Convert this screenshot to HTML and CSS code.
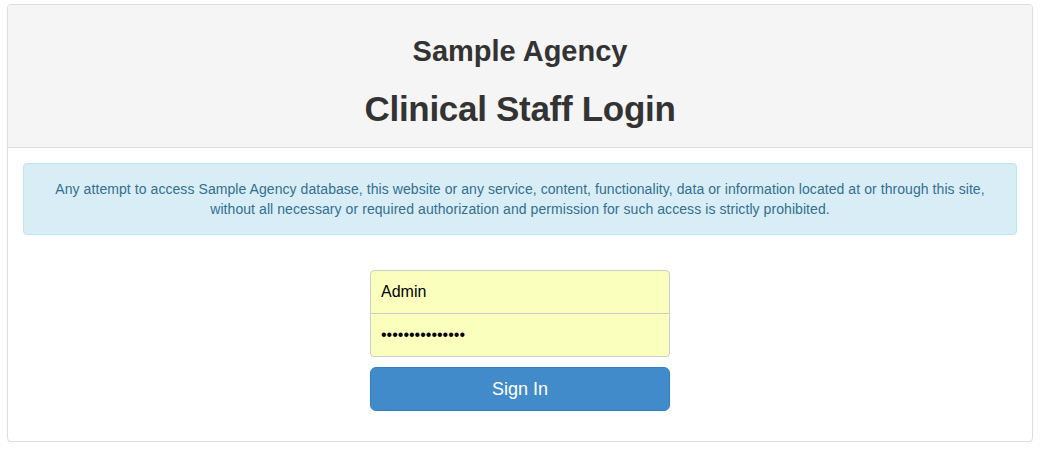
FILE: index.html
```html
<!DOCTYPE html>
<html lang="en">
  <head>
    <meta charset="UTF-8" />
    <meta name="viewport" content="width=device-width, initial-scale=1.0" />
    <title>Clinical Staff Login</title>
    <link rel="stylesheet" href="styles.css">
  </head>
  <body>
    <div class="page">
      <div class="panel">
        <div class="panel-heading">
          <h2>Sample Agency</h2>
          <h1>Clinical Staff Login</h1>
        </div>

        <div class="panel-body">
          <div class="alert-info">
            Any attempt to access Sample Agency database, this website or any service, content, functionality, data or information located at or through this site, without all necessary or required authorization and permission for such access is strictly prohibited.
          </div>

          <form class="form-signin" onsubmit="return false">
            <input type="text" class="first" value="Admin" />
            <input type="password" class="last" value="password1234567" />
            <button type="submit">Sign In</button>
          </form>
        </div>
      </div>
    </div>
  </body>
</html>
```

FILE: styles.css
```css
* {
  margin: 0;
  padding: 0;
  box-sizing: border-box;
  font-family: "Liberation Sans", Arial, Helvetica, sans-serif;
}

body {
  background: #fff;
  color: #333;
}

.page {
  padding: 4px 8px 0 7px;
}

.panel {
  border: 1px solid #ddd;
  border-radius: 4px;
  box-shadow: 0 1px 1px rgba(0, 0, 0, 0.05);
  overflow: hidden;
}

.panel-heading {
  background: #f5f5f5;
  border-bottom: 1px solid #ddd;
  text-align: center;
  padding: 30px 15px 18px;
}

.panel-heading h2 {
  font-size: 29px;
  font-weight: bold;
  line-height: 33px;
}

.panel-heading h1 {
  font-size: 35px;
  font-weight: bold;
  line-height: 40px;
  letter-spacing: -0.3px;
  margin-top: 21px;
}

.panel-body {
  padding: 15px;
}

.alert-info {
  background: #d9edf7;
  border: 1px solid #bce8f1;
  border-radius: 4px;
  color: #31708f;
  font-size: 14px;
  line-height: 20px;
  letter-spacing: 0.07px;
  text-align: center;
  padding: 15px;
  margin-bottom: 20px;
}

.form-signin {
  max-width: 330px;
  margin: 0 auto;
  padding: 15px;
  display: flex;
  flex-direction: column;
}

.form-signin input {
  height: 44px;
  font-size: 16px;
  padding: 10px;
  border: 1px solid #ccc;
  background: rgb(250, 255, 189);
  color: #000;
  outline: none;
}

.form-signin input.first {
  border-radius: 4px 4px 0 0;
  margin-bottom: -1px;
}

.form-signin input.last {
  border-radius: 0 0 4px 4px;
}

.form-signin button {
  margin-top: 10px;
  height: 44px;
  font-size: 18px;
  color: #fff;
  background: #428bca;
  border: 1px solid #357ebd;
  border-radius: 6px;
  cursor: pointer;
}

.form-signin button:hover {
  background: #3276b1;
}
```
